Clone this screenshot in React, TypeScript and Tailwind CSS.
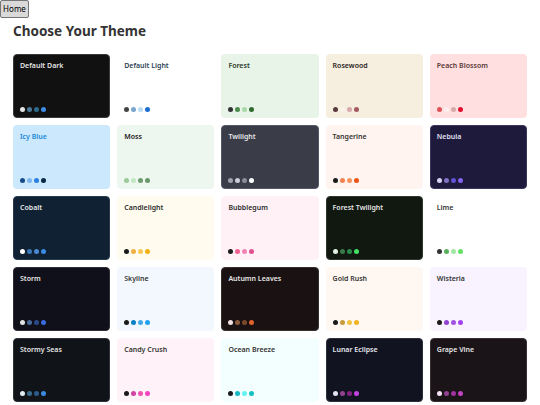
type Theme = {
  name: string;
  bg: string;
  text: string;
  border: string;
  dots: string[];
};

const themes: Theme[] = [
  { name: "Default Dark", bg: "bg-[#111111]", text: "text-[#e5e5e5]", border: "border-[#3a3a3a]", dots: ["#e4e4e4", "#4c7a96", "#2b6c8c", "#3d8ee6"] },
  { name: "Default Light", bg: "bg-white", text: "text-[#2c3e56]", border: "border-transparent", dots: ["#444444", "#7aa6cf", "#b9dcf2", "#1a6fd1"] },
  { name: "Forest", bg: "bg-[#e8f4e8]", text: "text-[#2b3a2b]", border: "border-transparent", dots: ["#333333", "#4c8c4c", "#a9d9a9", "#2f6b2f"] },
  { name: "Rosewood", bg: "bg-[#f6efdf]", text: "text-[#2a1c1c]", border: "border-transparent", dots: ["#5a3a3e", "#faf3ea", "#d6aaac", "#a45864"] },
  { name: "Peach Blossom", bg: "bg-[#ffdfdf]", text: "text-[#5a3a3a]", border: "border-transparent", dots: ["#e05258", "#ffeeee", "#d8a9a9", "#e0102e"] },

  { name: "Icy Blue", bg: "bg-[#cbe8fd]", text: "text-[#1a8ad4]", border: "border-transparent", dots: ["#174b8c", "#7fb6f2", "#2a7fe2", "#0b2a48"] },
  { name: "Moss", bg: "bg-[#eef7ef]", text: "text-[#1c1c1c]", border: "border-transparent", dots: ["#9bcb9b", "#c2e8c2", "#6e9c6e", "#6a986a"] },
  { name: "Twilight", bg: "bg-[#3a3d48]", text: "text-[#e6e6ea]", border: "border-[#55586a]", dots: ["#a3a3b3", "#cdcdda", "#8b8b99", "#ffffff"] },
  { name: "Tangerine", bg: "bg-[#fff4ef]", text: "text-[#333333]", border: "border-transparent", dots: ["#1a1a1a", "#f2834f", "#f7935f", "#ee5512"] },
  { name: "Nebula", bg: "bg-[#1e1a3b]", text: "text-[#e2e0f2]", border: "border-[#3a3660]", dots: ["#d9d2f2", "#8171c2", "#6252d4", "#8463f2"] },

  { name: "Cobalt", bg: "bg-[#0f2133]", text: "text-[#e6e6e6]", border: "border-[#2a3a4c]", dots: ["#ffffff", "#3b79b8", "#4a89d2", "#3b8ae4"] },
  { name: "Candlelight", bg: "bg-[#fffcef]", text: "text-[#2d2d2d]", border: "border-transparent", dots: ["#1a1a1a", "#f1b043", "#f8c852", "#f2b012"] },
  { name: "Bubblegum", bg: "bg-[#fff1f6]", text: "text-[#2d2d2d]", border: "border-transparent", dots: ["#1a1a1a", "#f2618f", "#f382b2", "#e2508f"] },
  { name: "Forest Twilight", bg: "bg-[#101810]", text: "text-[#e6e6e6]", border: "border-[#2c382c]", dots: ["#e2f2e2", "#3b7a4b", "#2b8a4b", "#42e262"] },
  { name: "Lime", bg: "bg-white", text: "text-[#333333]", border: "border-transparent", dots: ["#333333", "#5bb05b", "#a2e8a2", "#62e262"] },

  { name: "Storm", bg: "bg-[#10101a]", text: "text-[#e6e6e6]", border: "border-[#2e2e3a]", dots: ["#e2e2e2", "#4a6a9a", "#2a4a8a", "#3b6ae2"] },
  { name: "Skyline", bg: "bg-[#f3f8fe]", text: "text-[#333333]", border: "border-transparent", dots: ["#1a1a1a", "#0b80c2", "#42a9e9", "#21a1f2"] },
  { name: "Autumn Leaves", bg: "bg-[#1a1212]", text: "text-[#e6e6e6]", border: "border-[#382e2e]", dots: ["#f2e2e2", "#8b5b3b", "#7a4a2a", "#e2622b"] },
  { name: "Gold Rush", bg: "bg-[#fff8f2]", text: "text-[#333333]", border: "border-transparent", dots: ["#1a1a1a", "#c99b3b", "#f2c242", "#f2b222"] },
  { name: "Wisteria", bg: "bg-[#f8f3fe]", text: "text-[#333333]", border: "border-transparent", dots: ["#1a1a1a", "#9142d2", "#a252e2", "#a242f2"] },

  { name: "Stormy Seas", bg: "bg-[#101418]", text: "text-[#e6e6e6]", border: "border-[#2e3238]", dots: ["#e2eaf2", "#3b6b8b", "#2b5b8b", "#3b8ae2"] },
  { name: "Candy Crush", bg: "bg-[#fff3f9]", text: "text-[#333333]", border: "border-transparent", dots: ["#1a1a1a", "#d242a2", "#f252b2", "#f242c2"] },
  { name: "Ocean Breeze", bg: "bg-[#f3fefe]", text: "text-[#333333]", border: "border-transparent", dots: ["#1a1a1a", "#12b8c2", "#62f2f2", "#12c2c2"] },
  { name: "Lunar Eclipse", bg: "bg-[#111420]", text: "text-[#e6e6ee]", border: "border-[#2e303c]", dots: ["#e2e2f2", "#924292", "#822282", "#c242e2"] },
  { name: "Grape Vine", bg: "bg-[#1a1418]", text: "text-[#e6e6e6]", border: "border-[#383036]", dots: ["#f2e2f2", "#924292", "#a232a2", "#c242c2"] },
];

function ThemeCard({ theme }: { theme: Theme }) {
  return (
    <div
      className={`flex h-[64px] flex-col justify-between rounded-[4px] border px-[6px] pt-[6px] pb-[5px] ${theme.bg} ${theme.border}`}
    >
      <span className={`text-[7px] leading-[10px] font-semibold ${theme.text}`}>{theme.name}</span>
      <div className="flex gap-[2px]">
        {theme.dots.map((c, i) => (
          <span key={i} className="h-[5px] w-[5px] rounded-full" style={{ backgroundColor: c }} />
        ))}
      </div>
    </div>
  );
}

export default function App() {
  return (
    <div className="min-h-[405px] bg-white font-['Noto_Sans',sans-serif]">
      <button className="block h-[18px] w-[29px] rounded-[2px] border border-[#767676] bg-[#d9d9d9] text-center text-[8px] leading-none text-black">
        Home
      </button>
      <div className="px-[13px]">
        <h1 className="mt-[3px] mb-[13px] text-[13.5px] leading-[20px] font-bold text-[#333333]">Choose Your Theme</h1>
        <div className="grid grid-cols-5 gap-[7px]">
          {themes.map((t) => (
            <ThemeCard key={t.name} theme={t} />
          ))}
        </div>
      </div>
    </div>
  );
}
